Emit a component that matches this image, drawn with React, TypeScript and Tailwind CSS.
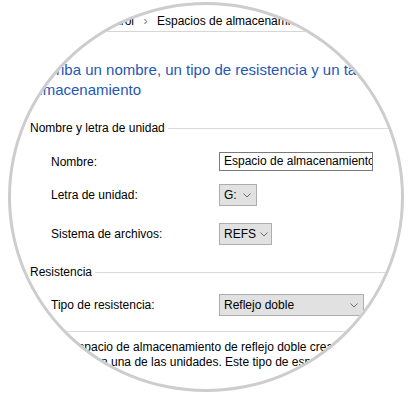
import React from 'react';

const font = { fontFamily: '"Liberation Sans", Arial, sans-serif' };

const ChevronDown: React.FC = () => (
  <svg width="8" height="5" viewBox="0 0 8 5" className="shrink-0">
    <path d="M0.5 0.5 L4 4 L7.5 0.5" fill="none" stroke="#6d6d6d" strokeWidth="1" />
  </svg>
);

interface DropdownProps {
  value: string;
  widthClass: string;
}

const Dropdown: React.FC<DropdownProps> = ({ value, widthClass }) => (
  <div
    className={`${widthClass} h-[22px] flex items-center justify-between gap-[4px] pl-[4px] pr-[5px] bg-[#e1e1e1] border border-[#adadad] text-[12px] text-black`}
  >
    <span className="whitespace-nowrap">{value}</span>
    <ChevronDown />
  </div>
);

const GroupHeader: React.FC<{ title: string }> = ({ title }) => (
  <div className="flex items-center pl-[30px] h-[16px] leading-[16px]">
    <span className="whitespace-nowrap text-[12px] text-black">{title}</span>
    <div className="flex-1 h-px bg-[#dadada] ml-[3px]" />
  </div>
);

const Row: React.FC<{ label: string; children: React.ReactNode; className?: string }> = ({
  label,
  children,
  className
}) => (
  <div className={`flex items-center ${className ?? ''}`}>
    <div className="w-[219px] shrink-0 pl-[51px] text-[12px] text-black whitespace-nowrap">{label}</div>
    {children}
  </div>
);

export default function App() {
  return (
    <div className="w-[410px] h-[399px] bg-white overflow-hidden" style={font}>
      <div className="ml-[8px] mt-[2px] w-[396px] h-[390px] rounded-[50%] border-[3px] border-[#cdcdcd] overflow-hidden bg-white">
        <div className="-ml-[11px] -mt-[5px] w-[420px]">
          {/* Barra de direcciones */}
          <div className="h-[32px] border-b border-[#d6d6d6] flex items-start pt-[13px] leading-[16px] text-[12px] text-black whitespace-nowrap">
            <div className="w-[134px] shrink-0 flex justify-end overflow-hidden">
              <span className="shrink-0">Todos los elementos de Panel de control</span>
            </div>
            <div className="w-[23px] shrink-0 flex justify-center text-[#7a7a7a]">›</div>
            <span className="shrink-0">Espacios de almacenamiento</span>
            <span className="shrink-0 mx-[8px] text-[#7a7a7a]">›</span>
            <span className="shrink-0">Crear un espacio de almacenamiento</span>
          </div>

          {/* Instrucción principal */}
          <div className="mt-[28px] pl-[31px] text-[15px] leading-[20px] text-[#1f57b3] whitespace-nowrap">
            Escriba un nombre, un tipo de resistencia y un tamaño para el espacio de
            <br />
            almacenamiento
          </div>

          <div className="mt-[20px]">
            <GroupHeader title="Nombre y letra de unidad" />
          </div>

          <Row label="Nombre:" className="mt-[16px] h-[19px]">
            <div className="w-[154px] h-[19px] border border-[#7a7a7a] bg-white pl-[4px] text-[12px] leading-[17px] text-black whitespace-nowrap overflow-hidden">
              Espacio de almacenamiento
            </div>
          </Row>

          <Row label="Letra de unidad:" className="mt-[13px] h-[22px]">
            <Dropdown value="G:" widthClass="w-[38px]" />
          </Row>

          <Row label="Sistema de archivos:" className="mt-[17px] h-[22px]">
            <Dropdown value="REFS" widthClass="w-[53px]" />
          </Row>

          <div className="mt-[19px]">
            <GroupHeader title="Resistencia" />
          </div>

          <Row label="Tipo de resistencia:" className="mt-[14px] h-[22px]">
            <Dropdown value="Reflejo doble" widthClass="w-[145px]" />
          </Row>

          <div className="mt-[15px] h-px bg-[#dadada]" />

          {/* Descripción */}
          <div className="mt-[8px] pl-[53px] text-[12px] leading-[15px] text-black whitespace-nowrap">
            Un espacio de almacenamiento de reflejo doble crea dos copias de los datos para protegerlos contra
            <br />
            errores en una de las unidades. Este tipo de espacio de almacenamiento requiere al menos dos unidades.
          </div>
        </div>
      </div>
    </div>
  );
}
